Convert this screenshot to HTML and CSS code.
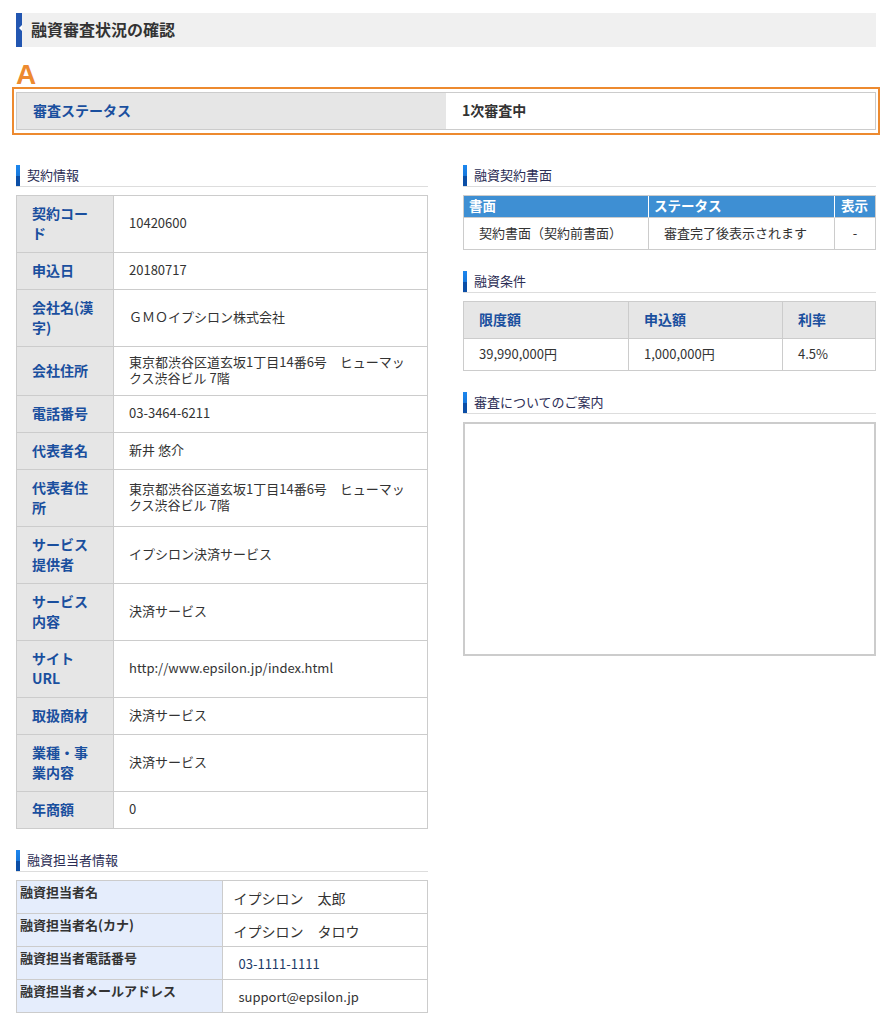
FILE: index.html
```html
<!DOCTYPE html>
<html lang="ja">
<head>
<meta charset="utf-8">
<title>融資審査状況の確認</title>
<link rel="stylesheet" href="styles.css">
</head>
<body>
<div class="page">
  <div class="title"><span class="title-bar"></span><h1>融資審査状況の確認</h1></div>
  <div class="mark">A</div>
  <div class="status-box">
    <table class="status">
      <tr><th>審査ステータス</th><td>1次審査中</td></tr>
    </table>
  </div>

  <div class="cols">
    <div class="col">
      <section class="sec">
        <h2 class="sec-h"><span>契約情報</span></h2>
        <table class="info">
          <colgroup><col class="c-lab"><col></colgroup>
          <tr><th>契約コード</th><td>10420600</td></tr>
          <tr><th>申込日</th><td>20180717</td></tr>
          <tr><th>会社名(漢字)</th><td>ＧＭＯイプシロン株式会社</td></tr>
          <tr><th>会社住所</th><td>東京都渋谷区道玄坂1丁目14番6号　ヒューマックス渋谷ビル 7階</td></tr>
          <tr><th>電話番号</th><td>03-3464-6211</td></tr>
          <tr><th>代表者名</th><td>新井 悠介</td></tr>
          <tr><th>代表者住所</th><td>東京都渋谷区道玄坂1丁目14番6号　ヒューマックス渋谷ビル 7階</td></tr>
          <tr><th>サービス提供者</th><td>イプシロン決済サービス</td></tr>
          <tr><th>サービス内容</th><td>決済サービス</td></tr>
          <tr><th>サイトURL</th><td>http://www.epsilon.jp/index.html</td></tr>
          <tr><th>取扱商材</th><td>決済サービス</td></tr>
          <tr><th>業種・事業内容</th><td>決済サービス</td></tr>
          <tr><th>年商額</th><td>0</td></tr>
        </table>
      </section>

      <section class="sec">
        <h2 class="sec-h"><span>融資担当者情報</span></h2>
        <table class="staff">
          <tr><th>融資担当者名</th><td class="big">イプシロン　太郎</td></tr>
          <tr><th>融資担当者名(カナ)</th><td class="big">イプシロン　タロウ</td></tr>
          <tr><th>融資担当者電話番号</th><td class="ind phone">03-1111-1111</td></tr>
          <tr><th>融資担当者メールアドレス</th><td class="ind">support@epsilon.jp</td></tr>
        </table>
      </section>
    </div>

    <div class="col">
      <section class="sec">
        <h2 class="sec-h"><span>融資契約書面</span></h2>
        <table class="docs">
          <colgroup><col class="d1"><col class="d2"><col class="d3"></colgroup>
          <tr><th>書面</th><th>ステータス</th><th>表示</th></tr>
          <tr><td>契約書面（契約前書面）</td><td>審査完了後表示されます</td><td class="center">-</td></tr>
        </table>
      </section>

      <section class="sec">
        <h2 class="sec-h"><span>融資条件</span></h2>
        <table class="terms">
          <colgroup><col class="t1"><col class="t2"><col class="t3"></colgroup>
          <tr><th>限度額</th><th>申込額</th><th>利率</th></tr>
          <tr><td>39,990,000円</td><td>1,000,000円</td><td>4.5%</td></tr>
        </table>
      </section>

      <section class="sec">
        <h2 class="sec-h"><span>審査についてのご案内</span></h2>
        <div class="guide"></div>
      </section>
    </div>
  </div>
</div>
</body>
</html>
```

FILE: styles.css
```css
* { box-sizing: border-box; }
html, body { margin: 0; padding: 0; background: #fff; }
body {
  font-family: "Noto Sans CJK JP", "Noto Sans", sans-serif;
  color: #333;
  font-size: 13px;
}
.page { padding: 13px 17px 0 16px; }

h1, h2 { margin: 0; font-weight: normal; }
table { border-spacing: 0; }

/* Page title */
.title {
  display: flex;
  align-items: center;
  height: 34px;
  background: #f0f0f0;
}
.title-bar {
  position: relative;
  align-self: stretch;
  width: 6px;
  background: #2256b1;
}
.title-bar::after {
  content: "";
  position: absolute;
  right: 0;
  top: 12px;
  border-style: solid;
  border-width: 3px 3px 3px 0;
  border-color: transparent #fff transparent transparent;
}
.title h1 {
  margin-left: 9px;
  padding-bottom: 3px;
  font-size: 16px;
  font-weight: bold;
  color: #333;
  line-height: 20px;
}

/* Orange highlight */
.mark {
  margin-top: 16px;
  height: 24px;
  font-family: "Liberation Sans", Arial, sans-serif;
  font-weight: bold;
  font-size: 28px;
  line-height: 24px;
  color: #ed8a2f;
}
.status-box {
  margin: 0 -4px;
  border: 2px solid #ed8a2f;
  padding: 3px 2px;
}
.status {
  width: 100%;
  border-collapse: collapse;
  table-layout: fixed;
  border: 1px solid #ccc;
}
.status th, .status td {
  padding: 7px 16px 9px;
  line-height: 20px;
  text-align: left;
  font-size: 14px;
  font-weight: bold;
}
.status th { width: 50%; background: #e6e6e6; color: #1a4f9e; }
.status td { color: #333; background: #fff; }

/* Columns */
.cols {
  display: grid;
  grid-template-columns: 412px 413px;
  column-gap: 35px;
  margin-top: 30px;
}
.sec { margin-bottom: 21px; }

.sec-h {
  border-bottom: 1px solid #ddd;
  margin-bottom: 8px;
}
.sec-h span {
  display: block;
  border-left: 4px solid #1a7fe6;
  border-image: linear-gradient(#1d88f0 0%, #1778dc 50%, #0b4ea6 52%, #0b4ea6 100%) 1;
  padding-left: 7px;
  height: 21px;
  line-height: 20px;
  font-size: 13px;
  color: #2b2d55;
}

/* Contract info table */
.info {
  width: 412px;
  border-collapse: collapse;
  table-layout: fixed;
  border: 1px solid #ccc;
}
.info .c-lab { width: 97px; }
.info th, .info td {
  border: 1px solid #ccc;
  text-align: left;
  vertical-align: middle;
}
.info th {
  background: #e6e6e6;
  color: #1a4f9e;
  font-size: 14px;
  font-weight: bold;
  line-height: 20px;
  padding: 7px 17px 9px 15px;
}
.info td {
  font-size: 13px;
  line-height: 16px;
  padding: 7px 15px 9px;
  color: #333;
  word-break: break-all;
}

/* Staff table */
.staff {
  width: 412px;
  border-collapse: collapse;
  table-layout: fixed;
  border: 1px solid #ccc;
}
.staff th, .staff td {
  border: 1px solid #ccc;
  height: 33px;
  text-align: left;
}
.staff th {
  width: 50%;
  background: #e5edfc;
  font-size: 13px;
  font-weight: bold;
  line-height: 17px;
  padding: 2px 3px 0;
  vertical-align: top;
  color: #333;
}
.staff td {
  vertical-align: middle;
  padding: 1px 11px 0;
  color: #333;
}
.staff td.big { font-size: 14px; }
.staff td.ind { padding-left: 16px; font-size: 13px; }
.staff td.phone { color: #213a66; }

/* Docs table */
.docs, .terms {
  width: 413px;
  table-layout: fixed;
  border-collapse: separate;
  border-top: 1px solid #ccc;
  border-left: 1px solid #ccc;
}
.docs .d1 { width: 185px; }
.docs .d2 { width: 186px; }
.docs th, .docs td, .terms th, .terms td {
  border-right: 1px solid #ccc;
  border-bottom: 1px solid #ccc;
  text-align: left;
}
.docs th {
  background: #3e8fd3;
  color: #fff;
  font-size: 13.5px;
  font-weight: bold;
  line-height: 17px;
  padding: 1px 5px 3px;
  border-right-color: #fff;
}
.docs th:last-child { border-right-color: #ccc; padding-left: 6px; }
.docs td {
  font-size: 13px;
  line-height: 17px;
  padding: 6px 15px 8px;
}
.docs td.center { text-align: center; padding: 6px 0 8px; }

/* Terms table */
.terms .t1 { width: 165px; }
.terms .t2 { width: 154px; }
.terms th {
  background: #e6e6e6;
  color: #1a4f9e;
  font-size: 14px;
  font-weight: bold;
  line-height: 20px;
  padding: 7px 15px 9px;
}
.terms td {
  font-size: 13px;
  line-height: 17px;
  padding: 6px 15px 8px;
}

/* Guide box */
.guide {
  height: 234px;
  border: 2px solid #ccc;
  background: #fff;
}
```
